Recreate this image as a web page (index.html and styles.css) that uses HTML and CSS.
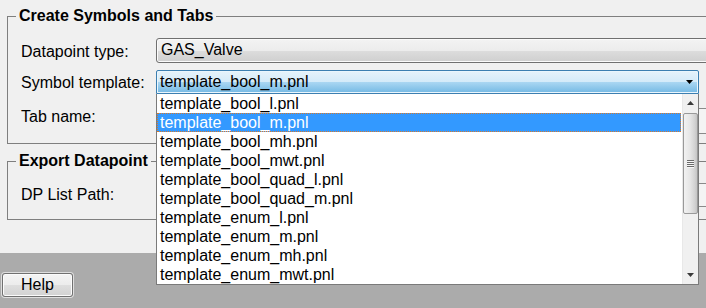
FILE: index.html
```html
<!DOCTYPE html>
<html lang="en">
<head>
    <meta charset="UTF-8">
    <title>Create Symbols and Tabs</title>
    <link rel="stylesheet" href="styles.css">
</head>
<body>
    <div class="panel">
        <fieldset class="group group-create">
            <legend>Create Symbols and Tabs</legend>

            <div class="row row-type">
                <label class="field-label">Datapoint type:</label>
                <div class="combo">GAS_Valve</div>
            </div>

            <div class="row row-symbol">
                <label class="field-label">Symbol template:</label>
                <div class="combo combo-open">
                    <span class="combo-text">template_bool_m.pnl</span>
                    <svg class="combo-arrow" width="7" height="4" viewBox="0 0 7 4"><path d="M0 0h7L3.5 4z" fill="#000"/></svg>

                    <!-- opened drop down list -->
                    <div class="popup">
                        <ul class="popup-items">
                            <li>template_bool_l.pnl</li>
                            <li class="selected">template_bool_m.pnl</li>
                            <li>template_bool_mh.pnl</li>
                            <li>template_bool_mwt.pnl</li>
                            <li>template_bool_quad_l.pnl</li>
                            <li>template_bool_quad_m.pnl</li>
                            <li>template_enum_l.pnl</li>
                            <li>template_enum_m.pnl</li>
                            <li>template_enum_mh.pnl</li>
                            <li>template_enum_mwt.pnl</li>
                        </ul>
                        <div class="scrollbar">
                            <div class="scroll-btn">
                                <svg width="7" height="4" viewBox="0 0 7 4"><path d="M3.5 0L7 4H0z" fill="#3a3a3a"/></svg>
                            </div>
                            <div class="scroll-track">
                                <div class="scroll-thumb">
                                    <span class="grip"></span>
                                    <span class="grip"></span>
                                    <span class="grip"></span>
                                    <span class="grip"></span>
                                </div>
                            </div>
                            <div class="scroll-btn">
                                <svg width="7" height="4" viewBox="0 0 7 4"><path d="M0 0h7L3.5 4z" fill="#3a3a3a"/></svg>
                            </div>
                        </div>
                    </div>
                </div>
            </div>

            <div class="row row-tab">
                <label class="field-label">Tab name:</label>
                <div class="edit"></div>
            </div>
        </fieldset>

        <fieldset class="group group-export">
            <legend>Export Datapoint</legend>
            <div class="row row-path">
                <label class="field-label">DP List Path:</label>
                <div class="edit"></div>
            </div>
        </fieldset>
    </div>

    <div class="footer">
        <button class="btn">Help</button>
    </div>
</body>
</html>
```

FILE: styles.css
```css
* {
    margin: 0;
    padding: 0;
    box-sizing: border-box;
}

body {
    font-family: 'Liberation Sans', Arial, sans-serif;
    font-size: 16px;
    color: #000;
    width: 706px;
    height: 308px;
    overflow: hidden;
    background: #ababab;
}

/* groups run on past the right edge, as in the dialog */
.panel {
    height: 253px;
    background: #f0f0f0;
    padding-top: 7px;
    overflow-x: clip;
}

.group {
    margin-left: 7px;
    width: 780px;
    border: 1px solid #7f7f7f;
    padding: 0;
}

.group legend {
    margin-left: 8px;
    padding: 0 3px;
    font-weight: bold;
    font-size: 16px;
    line-height: 18px;
}

.group-create {
    padding-bottom: 9px;
}

.group-export {
    margin-top: 8px;
    padding-bottom: 12px;
}

.row {
    display: flex;
    align-items: center;
    padding-left: 13px;
}

.field-label {
    width: 135px;
    flex-shrink: 0;
    line-height: 18px;
}

.row-type {
    margin-top: 13px;
    height: 25px;
}

.row-type .field-label {
    margin-top: 2px;
}

.row-symbol {
    margin-top: 7px;
    height: 24px;
}

.row-symbol .field-label {
    margin-top: 2px;
}

.row-tab {
    margin-top: 14px;
    height: 26px;
    align-items: flex-start;
}

.row-path {
    margin-top: 13px;
    height: 24px;
}

.combo {
    width: 600px;
    flex-shrink: 0;
    height: 100%;
    border: 1px solid #707070;
    border-radius: 3px;
    padding-left: 4px;
    line-height: 22px;
    background: linear-gradient(#f3f3f3 0%, #ececec 50%, #dddddd 50%, #cfcfcf 100%);
    box-shadow: inset 0 0 0 1px #fbfbfb;
}

.combo-open {
    position: relative;
    width: 543px;
    display: flex;
    align-items: center;
    padding-left: 3px;
    border-color: #3c7fb1;
    border-radius: 2px 2px 0 0;
    background: linear-gradient(#e6f3fb 0%, #d5ebf9 48%, #a9d6f2 52%, #74b9e4 100%);
    box-shadow: inset 0 0 0 1px #eaf6fd;
}

.combo-text {
    flex: 1;
}

.combo-arrow {
    margin-right: 5px;
}

.edit {
    width: 600px;
    flex-shrink: 0;
    height: 100%;
    border: 1px solid #8a8a8a;
    background: #f4f4f4;
}

.popup {
    position: absolute;
    left: -1px;
    top: calc(100% + 1px);
    width: 543px;
    height: 191px;
    display: flex;
    background: white;
    border: 1px solid #7a7a7a;
    border-top: none;
    z-index: 10;
}

.popup-items {
    list-style: none;
    flex: 1;
}

.popup-items li {
    height: 19px;
    line-height: 19px;
    padding-left: 3px;
    white-space: nowrap;
}

.popup-items li.selected {
    background: #3399ff;
    color: white;
    outline: 1px dotted #d8792a;
    outline-offset: -1px;
}

.scrollbar {
    width: 16px;
    margin-left: 1px;
    display: flex;
    flex-direction: column;
    background: #f0f0f0;
    border-left: 1px solid #e8e8e8;
}

.scroll-btn {
    height: 18px;
    display: flex;
    align-items: center;
    justify-content: center;
}

.scroll-track {
    flex: 1;
}

.scroll-thumb {
    height: 101px;
    margin: 1px 0 0 0;
    border: 1px solid #999;
    border-radius: 2px;
    background: linear-gradient(90deg, #f2f2f2 0%, #e6e6e6 45%, #d4d4d4 80%, #c4c4c4 100%);
    display: flex;
    flex-direction: column;
    align-items: center;
    justify-content: center;
    gap: 1px;
}

.grip {
    display: block;
    width: 7px;
    height: 1px;
    background: #6a6a6a;
    box-shadow: 0 1px 0 #f6f6f6;
}

.footer {
    height: 55px;
    padding: 20px 0 0 2px;
}

.btn {
    width: 71px;
    height: 24px;
    font-family: 'Liberation Sans', Arial, sans-serif;
    font-size: 16px;
    color: #000;
    border: 1px solid #707070;
    border-radius: 3px;
    background: linear-gradient(#f4f4f4 0%, #ececec 50%, #dedede 52%, #d2d2d2 100%);
    box-shadow: 0 0 0 1px #dedede, inset 0 0 0 1px #fbfbfb;
}
```
